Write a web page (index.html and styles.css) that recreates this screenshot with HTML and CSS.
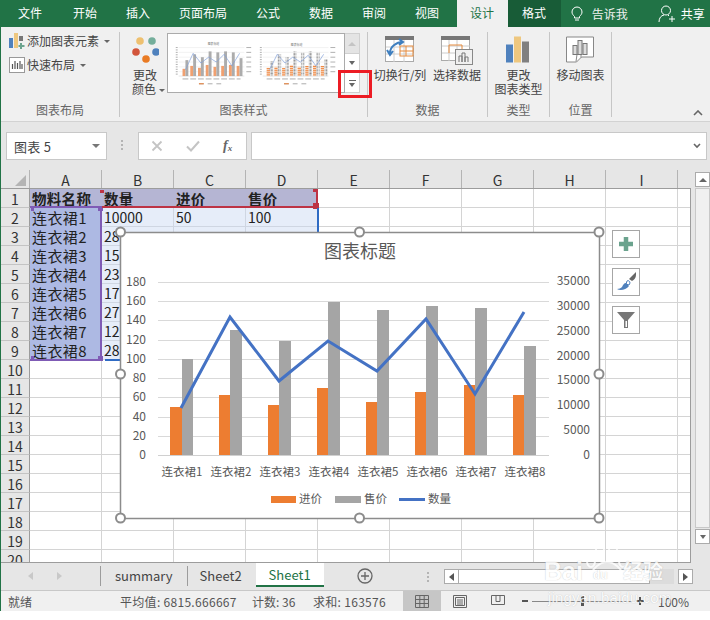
FILE: index.html
```html
<!DOCTYPE html>
<html lang="zh-CN">
<head>
<meta charset="utf-8">
<title>Excel</title>
<link rel="stylesheet" href="styles.css">
</head>
<body>
<div class="app">
  <nav class="tabbar">
    <span class="tab first">文件</span><span class="tab">开始</span><span class="tab">插入</span><span class="tab">页面布局</span><span class="tab">公式</span><span class="tab">数据</span><span class="tab">审阅</span><span class="tab">视图</span>
    <span class="tab active">设计</span><span class="tab format">格式</span>
    <span class="tell">
      <svg width="12" height="16" viewBox="0 0 12 16"><path d="M3.500 10.500C2 9 1 7.800 1 6a5 5 0 0 1 10 0c0 1.800-1 3-2.500 4.500V12h-5zM4 14h4" fill="none" stroke="#fff" stroke-width="1"/></svg>
      告诉我</span>
    <span class="share">
      <svg width="18" height="18" viewBox="0 0 18 18"><circle cx="8" cy="5.500" r="4.500" fill="none" stroke="#fff"/><path d="M1 17c0-4 2-6.500 5-7M10 10l1 1M14 11v6M11 14h6" fill="none" stroke="#fff"/></svg>
      共享</span>
  </nav>

  <div class="main">
    <section class="ribbon">
      <div class="group g1">
        <div class="group-body stack">
          <div class="small-row">
            <svg width="16" height="16" viewBox="0 0 16 16"><rect x="0" y="5" width="4" height="10" fill="#4f81bd"/><rect x="5" y="0" width="4" height="15" fill="#eec77f"/><rect x="10" y="3" width="4" height="5" fill="#777"/><path d="M12 10v6M9.500 13h6" stroke="#6ba38e" stroke-width="2"/></svg>
            <span>添加图表元素</span><i class="caret"></i>
          </div>
          <div class="small-row">
            <svg width="16" height="16" viewBox="0 0 16 16"><rect x=".5" y=".5" width="15" height="15" fill="#fff" stroke="#999"/><path d="M3.500 12V7M6 12V4M8.500 12V6M11 12V4M13 12V7" stroke="#555" stroke-width="1.200"/></svg>
            <span>快速布局</span><i class="caret"></i>
          </div>
        </div>
        <div class="group-label">图表布局</div>
      </div>

      <div class="group g2">
        <div class="group-body row">
          <div class="big colors">
            <svg class="big-icon" width="28" height="30" viewBox="0 0 28 30"><circle cx="9" cy="6" r="3.800" fill="#eec06f"/><circle cx="21" cy="6" r="3.800" fill="#74ae9b"/><circle cx="5" cy="17" r="3.800" fill="#d2553b"/><circle cx="25" cy="17" r="3.800" fill="#4f81bd"/><circle cx="15" cy="24" r="3.800" fill="#e97b24"/></svg>
            <span>更改</span>
            <span>颜色<i class="caret"></i></span>
          </div>
          <div class="gallery">
            <svg class="gallery-art" width="178" height="60" viewBox="167 33 178 60">
              <defs>
                <g id="mini-axis" stroke="#e6e6e6" stroke-width=".5"><path d="M176 47h68M176 52h68M176 57h68M176 62h68M176 67h68M176 72h68"/><path d="M176 76.500h68" stroke="#ccc"/><path d="M173 47h2M173 49.500h2M173 52h2M173 54.500h2M173 57h2M173 59.500h2M173 62h2M173 64.500h2M173 67h2M173 69.500h2M173 72h2M173 74.500h2" stroke="#999" stroke-width=".8"/><path d="M246 47h5M246 52h5M246 57h5M246 62h5M246 67h5M246 72h5" stroke="#999" stroke-width=".8"/></g>
                <pattern id="dots" width="1.500" height="1.500" patternUnits="userSpaceOnUse"><rect width="1.500" height="1.500" fill="#fff"/><rect width="1" height="1" fill="#8d8d8d"/></pattern>
                <pattern id="dashes" width="2" height="2" patternUnits="userSpaceOnUse"><rect width="2" height="2" fill="#fff"/><rect width="2" height="1.200" fill="#ed7d31"/></pattern>
              </defs>
              <use href="#mini-axis"/>
              <text class="mini-title" x="212" y="44.500" text-anchor="middle">图表标题</text>
              <g fill="#f0a070"><rect x="180" y="69" width="3" height="7.500"/><rect x="188" y="66" width="3" height="10.500"/><rect x="196" y="68" width="3" height="8.500"/><rect x="204" y="65" width="3" height="11.500"/><rect x="212" y="67" width="3" height="9.500"/><rect x="220" y="66" width="3" height="10.500"/><rect x="228" y="65" width="3" height="11.500"/><rect x="236" y="66" width="3" height="10.500"/></g>
              <g fill="#acacac"><rect x="183" y="60" width="3" height="16.500"/><rect x="191" y="54" width="3" height="22.500"/><rect x="199" y="57" width="3" height="19.500"/><rect x="207" y="51" width="3" height="25.500"/><rect x="215" y="52" width="3" height="24.500"/><rect x="223" y="51" width="3" height="25.500"/><rect x="231" y="52" width="3" height="24.500"/><rect x="239" y="58" width="3" height="18.500"/></g>
              <polyline points="183,70 191,53 199,63 207,57 215,62 223,54 231,66 239,53" fill="none" stroke="#7f9fd8" stroke-width=".7"/>
              <path d="M197 84.500h5M206 84.500h5M215 84.500h5" stroke="#aaa"/><path d="M197 84.500h5" stroke="#ed7d31"/>
              <path d="M180 79.500h60" stroke="#aaa" stroke-width="1" stroke-dasharray="6 2"/>
              <g transform="translate(87 0)"><use href="#mini-axis"/></g>
              <text class="mini-title" x="298" y="45.500" text-anchor="middle">图表标题</text>
              <g fill="url(#dashes)"><rect x="267" y="68" width="3.500" height="8.500"/><rect x="275" y="67" width="3.500" height="9.500"/><rect x="283" y="68" width="3.500" height="8.500"/><rect x="291" y="65" width="3.500" height="11.500"/><rect x="299" y="67" width="3.500" height="9.500"/><rect x="307" y="66" width="3.500" height="10.500"/><rect x="315" y="65" width="3.500" height="11.500"/><rect x="323" y="66" width="3.500" height="10.500"/></g>
              <g fill="url(#dots)"><rect x="270.500" y="61" width="3.500" height="15.500"/><rect x="278.500" y="54" width="3.500" height="22.500"/><rect x="286.500" y="57" width="3.500" height="19.500"/><rect x="294.500" y="51" width="3.500" height="25.500"/><rect x="302.500" y="52" width="3.500" height="24.500"/><rect x="310.500" y="51" width="3.500" height="25.500"/><rect x="318.500" y="52" width="3.500" height="24.500"/><rect x="326.500" y="59" width="3.500" height="17.500"/></g>
              <polyline points="270,70 278,54 286,63 294,57 302,62 310,55 318,66 326,54" fill="none" stroke="#7f9fd8" stroke-width=".7"/>
              <path d="M267 79.500h60" stroke="#aaa" stroke-dasharray="6 2"/>
              <path d="M285 84.500h5M294 84.500h5M303 84.500h5" stroke="#aaa"/><path d="M285 84.500h5" stroke="#ed7d31"/>
            </svg>
            <div class="gallery-btns">
              <div class="gbtn up"><i class="tri-up"></i></div>
              <div class="gbtn"><i class="tri-down"></i></div>
              <div class="gbtn last"><i class="more"></i></div>
            </div>
          </div>
        </div>
        <div class="group-label">图表样式</div>
      </div>

      <div class="group g3">
        <div class="group-body row data-row">
          <div class="big switch">
            <svg class="big-icon" width="30" height="28" viewBox="0 0 30 28"><rect x=".5" y=".5" width="28" height="25" fill="#fff" stroke="#aaa"/><rect x="0" y="0" width="29" height="4" fill="#777"/><path d="M1 11h28M1 18h28M9 4v22M19 4v22" stroke="#d0d0d0"/><rect x="15" y="10" width="13" height="10" fill="none" stroke="#e58a3c"/><path d="M15 15h13M21 10v10" stroke="#e58a3c"/><path d="M5 17c0-6 6-11 13-11M14 3l4 3-4 3M2 14l3 5 3-4" fill="none" stroke="#3f7fbf" stroke-width="2"/></svg>
            <span>切换行/列</span>
          </div>
          <div class="big select">
            <svg class="big-icon" width="32" height="30" viewBox="0 0 32 30"><rect x=".5" y="1.500" width="28" height="24" fill="#fff" stroke="#aaa"/><rect x="0" y="1" width="29" height="4" fill="#777"/><path d="M1 11h28M1 18h28M8 5v21M16 5v21" stroke="#ccc"/><path d="M8 18v-8h13v5" fill="none" stroke="#e58a3c"/><rect x="14.500" y="14.500" width="17" height="15" fill="#f0f0f0" stroke="#888"/><path d="M18 27v-6h3v6M21 27V18h3v9M24 27v-5h3v5" fill="none" stroke="#777"/></svg>
            <span>选择数据</span>
          </div>
        </div>
        <div class="group-label">数据</div>
      </div>

      <div class="group g4">
        <div class="group-body row center">
          <div class="big">
            <svg class="big-icon" width="24" height="27" viewBox="0 0 24 27"><rect x="0" y="8" width="7" height="18" fill="#4f81bd"/><rect x="8" y="0" width="7" height="26" fill="#eec77f"/><rect x="16" y="5" width="7" height="21" fill="#808080"/></svg>
            <span>更改</span>
            <span>图表类型</span>
          </div>
        </div>
        <div class="group-label">类型</div>
      </div>

      <div class="group g5">
        <div class="group-body row center">
          <div class="big">
            <svg class="big-icon" width="29" height="27" viewBox="0 0 29 27"><path d="M.5.500h27v20h-12l-5 5h-10z" fill="#fff" stroke="#888"/><path d="M15 21v-3l-4 0-1 7" fill="none" stroke="#888"/><rect x="7" y="9" width="4" height="9" fill="#ddd" stroke="#777"/><rect x="12" y="4" width="4" height="14" fill="#ddd" stroke="#777"/><rect x="17" y="7" width="4" height="11" fill="#ddd" stroke="#777"/></svg>
            <span>移动图表</span>
          </div>
        </div>
        <div class="group-label">位置</div>
      </div>

      <svg class="collapse" width="10" height="6" viewBox="0 0 10 6"><path d="M1 5l4-4 4 4" fill="none" stroke="#666" stroke-width="1.600"/></svg>
    </section>

    <section class="formula">
      <div class="namebox"><span>图表 5</span><i class="name-arrow"></i></div>
      <div class="grip"></div>
      <div class="fx-box">
        <svg width="12" height="12" viewBox="0 0 12 12"><path d="M1.500 1.500l9 9M10.500 1.500l-9 9" stroke="#c4c4c4" stroke-width="1.800"/></svg>
        <svg width="14" height="12" viewBox="0 0 14 12"><path d="M1 6.500l4 4 8-9" fill="none" stroke="#c4c4c4" stroke-width="2"/></svg>
        <span class="fx">f<sub>x</sub></span>
      </div>
      <div class="input"><svg width="8" height="6" viewBox="0 0 8 6"><path d="M1 1l3 3 3-3" fill="none" stroke="#666" stroke-width="1.600"/></svg></div>
    </section>

    <section class="sheet">
      <div class="grid">
        <div class="col-head">
          <div class="corner"><i></i></div>
          <div class="col">A</div><div class="col">B</div><div class="col">C</div><div class="col">D</div><div class="col">E</div><div class="col">F</div><div class="col">G</div><div class="col">H</div><div class="col">I</div><div class="col tail"></div>
        </div>
        <div class="grid-body">
          <div class="row-head">
            <div>1</div><div>2</div><div>3</div><div>4</div><div>5</div><div>6</div><div>7</div><div>8</div><div>9</div><div>10</div><div>11</div><div>12</div><div>13</div><div>14</div><div>15</div><div>16</div><div>17</div><div>18</div><div>19</div><div>20</div>
          </div>
          <div class="cells">
            <div class="cell head-a">物料名称</div><div class="cell head-b">数量</div><div class="cell head-b">进价</div><div class="cell head-b">售价</div>
            <div class="cell name">连衣裙1</div><div class="cell val">10000</div><div class="cell val">50</div><div class="cell val">100</div>
            <div class="cell name">连衣裙2</div><div class="cell val">28</div><div class="cell val"></div><div class="cell val"></div>
            <div class="cell name">连衣裙3</div><div class="cell val">15</div>
            <div class="cell name">连衣裙4</div><div class="cell val">23</div>
            <div class="cell name">连衣裙5</div><div class="cell val">17</div>
            <div class="cell name">连衣裙6</div><div class="cell val">27</div>
            <div class="cell name">连衣裙7</div><div class="cell val">12</div>
            <div class="cell name">连衣裙8</div><div class="cell val">28</div>

            <div class="range purple"><i class="hd h-tl"></i><i class="hd h-tr"></i><i class="hd h-bl"></i><i class="hd h-br"></i></div>
            <div class="range red"><i class="hd h-tl"></i><i class="hd h-tr"></i><i class="hd h-br"></i></div>
            <div class="range blue-r"></div>
            <div class="range blue-b"></div>

            <svg class="chart" width="480" height="287" viewBox="120 232 480 287">
              <rect x="120.500" y="232.500" width="479" height="286" fill="#fff" stroke="#8c8c8c" stroke-width="1.500"/>
              <text class="c-title" x="360" y="258" text-anchor="middle">图表标题</text>
              <path d="M158 282.500h391M158 301.500h391M158 320.500h391M158 340.500h391M158 359.500h391M158 378.500h391M158 397.500h391M158 417.500h391M158 436.500h391" stroke="#d9d9d9"/>
              <path d="M158 455.500h391" stroke="#d0d0d0"/>
              <g class="c-axis" text-anchor="end">
                <text x="146" y="286">180</text><text x="146" y="305">160</text><text x="146" y="324">140</text><text x="146" y="344">120</text><text x="146" y="363">100</text><text x="146" y="382">80</text><text x="146" y="401">60</text><text x="146" y="421">40</text><text x="146" y="440">20</text><text x="146" y="459">0</text>
              </g>
              <g class="c-axis" text-anchor="end">
                <text x="590" y="285">35000</text><text x="590" y="310">30000</text><text x="590" y="335">25000</text><text x="590" y="360">20000</text><text x="590" y="384">15000</text><text x="590" y="409">10000</text><text x="590" y="434">5000</text><text x="590" y="459">0</text>
              </g>
              <g fill="#ed7d31">
                <rect x="170" y="407" width="12" height="48"/><rect x="219" y="395" width="11" height="60"/><rect x="268" y="405" width="11" height="50"/><rect x="317" y="388" width="11" height="67"/><rect x="366" y="402" width="11" height="53"/><rect x="415" y="392" width="11" height="63"/><rect x="464" y="385" width="11" height="70"/><rect x="513" y="395" width="11" height="60"/>
              </g>
              <g fill="#a5a5a5">
                <rect x="182" y="359" width="11" height="96"/><rect x="230" y="330" width="12" height="125"/><rect x="279" y="341" width="12" height="114"/><rect x="328" y="302" width="12" height="153"/><rect x="377" y="310" width="12" height="145"/><rect x="426" y="306" width="12" height="149"/><rect x="475" y="308" width="12" height="147"/><rect x="524" y="346" width="12" height="109"/>
              </g>
              <polyline points="181,408 230,317 279,381 328,341 377,371 426,319 475,394 524,312" fill="none" stroke="#4472c4" stroke-width="3"/>
              <g class="c-cat" text-anchor="middle">
                <text x="182" y="476">连衣裙1</text><text x="231" y="476">连衣裙2</text><text x="280" y="476">连衣裙3</text><text x="329" y="476">连衣裙4</text><text x="378" y="476">连衣裙5</text><text x="427" y="476">连衣裙6</text><text x="476" y="476">连衣裙7</text><text x="525" y="476">连衣裙8</text>
              </g>
              <rect x="271" y="496" width="25" height="7" fill="#ed7d31"/><text class="c-cat" x="299" y="503">进价</text>
              <rect x="335" y="496" width="26" height="7" fill="#a5a5a5"/><text class="c-cat" x="364" y="503">售价</text>
              <path d="M399 499.500h26" stroke="#4472c4" stroke-width="3"/><text class="c-cat" x="428" y="503">数量</text>
              <g fill="#fff" stroke="#8c8c8c" stroke-width="2">
                <circle cx="120.500" cy="232" r="4.500"/><circle cx="359.500" cy="232" r="4.500"/><circle cx="599" cy="232" r="4.500"/><circle cx="120.500" cy="374" r="4.500"/><circle cx="599" cy="374" r="4.500"/><circle cx="120.500" cy="518" r="4.500"/><circle cx="359.500" cy="518" r="4.500"/><circle cx="599" cy="518" r="4.500"/>
              </g>
            </svg>

            <div class="side">
              <div class="side-btn"><svg width="16" height="16" viewBox="0 0 16 16"><path d="M8 1v14M1 8h14" stroke="#6ba38e" stroke-width="4.500"/></svg></div>
              <div class="side-btn"><svg width="22" height="22" viewBox="0 0 22 22"><path d="M21 1l-7 7 3 2c2-1 4-3 4-6z" fill="#666"/><path d="M12 10c1-1 3 0 3 2l-1 2-3-1z" fill="#fff" stroke="#4f81bd"/><path d="M11 12c-2 0-3 2-4 4-1 1-3 2-5 2 3 2 9 1 12-3z" fill="#4f81bd"/></svg></div>
              <div class="side-btn"><svg width="20" height="20" viewBox="0 0 20 20"><path d="M1 2h18l-7 8v8H8v-8z" fill="#777"/><path d="M9.500 11h1.500v6H9.500z" fill="#fff"/></svg></div>
            </div>
          </div>
        </div>
      </div>
      <div class="vscroll">
        <div class="vbtn"><i class="tri-up dark"></i></div>
        <div class="vthumb"></div>
        <div class="vbtn"><i class="tri-down dark"></i></div>
      </div>
    </section>

    <section class="tabs">
      <div class="nav"><i class="nav-l"></i><i class="nav-r"></i></div>
      <div class="sheet-tab">summary</div>
      <div class="sheet-tab s2">Sheet2</div>
      <div class="sheet-tab on">Sheet1</div>
      <svg class="add" width="16" height="16" viewBox="0 0 16 16"><circle cx="8" cy="8" r="7" fill="none" stroke="#666" stroke-width="1.300"/><path d="M8 4v8M4 8h8" stroke="#666" stroke-width="1.300"/></svg>
      <div class="hgrip"></div>
      <div class="hscroll">
        <div class="hbtn"><i class="nav-l dark"></i></div>
        <div class="hthumb"></div>
        <div class="htrack"></div>
        <div class="hbtn"><i class="nav-r dark"></i></div>
      </div>
    </section>

    <footer class="status">
      <span class="st-ready">就绪</span>
      <span class="st-avg">平均值: 6815.666667</span>
      <span class="st-count">计数: 36</span>
      <span class="st-sum">求和: 163576</span>
      <div class="view on"><svg width="14" height="13" viewBox="0 0 14 13"><path d="M.5.500h13v12H.5zM.5 4.500h13M.5 8.500h13M4.800.500v12M9.200.500v12" fill="none" stroke="#666"/></svg></div>
      <div class="view"><svg width="14" height="13" viewBox="0 0 14 13"><path d="M.5.500h13v12H.5z" fill="none" stroke="#666"/><path d="M2.500 2.500h9v8h-9zM4 5h6M4 7h6M4 9h6" fill="none" stroke="#666"/></svg></div>
      <div class="view"><svg width="14" height="13" viewBox="0 0 14 13"><path d="M.5.500h13v9H.5zM5 .500v6h4v-6" fill="none" stroke="#666"/></svg></div>
      <div class="zoom">
        <i class="minus"></i>
        <div class="slider"><i class="knob"></i></div>
        <i class="plus"></i>
      </div>
      <span class="pct">100%</span>
    </footer>
  </div>

  <div class="redbox"></div>

  <div class="watermark">
    <svg width="44" height="40" viewBox="0 0 44 40"><g fill="none" stroke="#fff" stroke-width="2"><ellipse cx="6" cy="18" rx="4" ry="6"/><ellipse cx="15" cy="6" rx="4" ry="5.500"/><ellipse cx="28" cy="6" rx="4" ry="5.500"/><ellipse cx="38" cy="18" rx="4" ry="6"/><path d="M6 34c0-8 9-15 16-15s16 7 16 15c0 4-6 5-16 5S6 38 6 34z"/></g></svg>
    <div class="wm-main"><span>Bai</span><span class="wm-du">du</span><span class="wm-jy">经验</span></div>
    <div class="wm-sub">jingyan.baidu.com</div>
  </div>
</div>
</body>
</html>
```
FILE: styles.css
```css
* { box-sizing: border-box; }
html, body { margin: 0; padding: 0; background: #fff; }
body { width: 710px; height: 620px; overflow: hidden; font-family: "Noto Sans CJK SC", "Noto Sans", sans-serif; color: #444; }
i { display: block; font-style: normal; }
.app { position: relative; width: 710px; height: 611px; }

/* tab bar */
.tabbar { display: flex; align-items: stretch; height: 27px; background: #217346; color: #fff; font-size: 12px; line-height: 25px; }
.tab { padding: 0 14.500px; }
.tab.first { padding: 0 16.500px 0 18px; }
.tab.active { width: 51px; margin-left: 3px; padding: 0; text-align: center; background: #f0f0f0; color: #217346; }
.tab.format { width: 53px; padding: 0; text-align: center; background: #185c37; }
.tell { display: flex; align-items: center; gap: 9px; margin-left: 10px; color: #f0f0f0; }
.share { display: flex; align-items: center; gap: 5px; margin-left: 30px; }

.main { border-left: 1px solid #217346; }

/* ribbon */
.ribbon { position: relative; display: flex; height: 95px; padding: 5px 0 4px; background: #f0f0f0; border-bottom: 1px solid #d2d2d2; font-size: 12px; color: #444; }
.group { display: flex; flex-direction: column; border-right: 1px solid #c6c6c6; }
.g1 { width: 119px; }
.g2 { width: 248px; }
.g3 { width: 120px; }
.g4 { width: 62px; }
.g5 { width: 62px; }
.group-body { flex: 1; min-height: 0; }
.group-label { height: 16px; padding-top: 1px; line-height: 15px; text-align: center; color: #666; }
.stack { display: flex; flex-direction: column; gap: 6px; padding-left: 8px; }
.small-row { display: flex; align-items: center; height: 18px; gap: 2px; line-height: 18px; }
.small-row svg { flex: none; }
.caret { display: inline-block; width: 0; height: 0; margin-left: 3px; border: 3px solid transparent; border-top: 3px solid #666; border-bottom: 0; vertical-align: middle; }
.row { display: flex; }
.row.center { justify-content: center; }
.big { display: flex; flex-direction: column; align-items: center; padding-top: 3px; line-height: 14px; white-space: nowrap; }
.big-icon { display: block; height: 30px; margin-bottom: 3px; flex: none; }
.colors { width: 40px; margin-left: 5px; }
.colors .big-icon { margin-bottom: 3px; }
.colors span:last-child { margin-left: 7px; }
.gallery { display: flex; width: 193px; height: 60px; margin: 1px 0 0 2px; }
.gallery-art { display: block; flex: none; background: #fff; border: 1px solid #ababab; }
.mini-title { font-size: 3px; fill: #777; }
.gallery-btns { display: flex; flex-direction: column; width: 15px; flex: none; }
.gbtn { display: flex; align-items: center; justify-content: center; height: 19px; background: #fff; border: 1px solid #d0d0d0; border-left: 0; border-top: 0; }
.gbtn.up { height: 21px; background: #e4e4e4; border-top: 1px solid #d0d0d0; }
.gbtn.last { height: 20px; }
.tri-up { width: 0; height: 0; border: 4px solid transparent; border-top: 0; border-bottom: 4px solid #c4c4c4; }
.tri-down { width: 0; height: 0; border: 3.500px solid transparent; border-bottom: 0; border-top: 4px solid #666; }
.tri-up.dark { border-bottom-color: #666; }
.more { width: 7px; height: 6px; border-top: 1px solid #666; position: relative; }
.more::after { content: ""; position: absolute; left: 0; top: 2px; border: 3.500px solid transparent; border-bottom: 0; border-top: 4px solid #666; }
.data-row { padding-left: 5px; gap: 5px; }
.switch { width: 54px; }
.select { width: 50px; }
.collapse { position: absolute; left: 692px; top: 83px; }

/* formula bar */
.formula { display: flex; align-items: flex-start; height: 48px; padding: 10px 2px 0 5px; background: #e6e6e6; font-size: 13px; }
.namebox { display: flex; align-items: center; justify-content: space-between; width: 101px; height: 28px; padding: 0 6px 0 7px; background: #fff; border: 1px solid #c8c8c8; color: #444; letter-spacing: .3px; }
.name-arrow { border: 4px solid transparent; border-bottom: 0; border-top: 4px solid #777; margin-right: 0; }
.grip { width: 2px; height: 12px; margin: 8px 15px 0 14px; background-image: linear-gradient(#b4b4b4 2px, transparent 2px); background-size: 2px 4px; }
.fx-box { display: flex; align-items: center; gap: 23px; width: 109px; height: 28px; padding: 0 0 0 12px; margin-right: 4px; background: #fff; border: 1px solid #c8c8c8; }
.fx { font-family: "Liberation Serif", serif; font-style: italic; font-weight: bold; font-size: 14px; line-height: 14px; color: #666; }
.fx sub { font-size: 9px; vertical-align: -1px; line-height: 0; }
.input { display: flex; align-items: center; justify-content: flex-end; width: 456px; height: 28px; padding-right: 5px; background: #fff; border: 1px solid #c8c8c8; }

/* sheet */
.sheet { display: flex; height: 393px; background: #e6e6e6; }
.grid { width: 690px; flex: none; height: 393px; }
.col-head { display: flex; height: 19px; background: #e6e6e6; border-bottom: 1px solid #9c9c9c; color: #333; font-size: 14px; line-height: 20px; }
.corner { position: relative; width: 29px; flex: none; border-right: 1px solid #b4b4b4; }
.corner i { position: absolute; left: 14px; top: 5px; width: 0; height: 0; border-style: solid; border-width: 0 0 11px 11px; border-color: transparent transparent #b4b4b4 transparent; }
.col { width: 72px; flex: none; text-align: center; border-right: 1px solid #b4b4b4; }
.col.tail { width: 12px; border-right: 0; }
.grid-body { display: flex; height: 374px; overflow: hidden; border-right: 1px solid #9c9c9c; border-bottom: 1px solid #9c9c9c; }
.row-head { width: 29px; flex: none; font-size: 14px; color: #333; }
.row-head div { height: 19px; line-height: 20px; padding-left: 0; text-align: center; border-right: 1px solid #9c9c9c; border-bottom: 1px solid #c4c4c4; }
.cells { position: relative; flex: 1; display: grid; grid-template-columns: repeat(4, 72px); grid-auto-rows: 19px; align-content: start; background-color: #fff; background-image: linear-gradient(to right, transparent 71px, #d4d4d4 71px), linear-gradient(to bottom, transparent 18px, #d4d4d4 18px); background-size: 72px 100%, 100% 19px; }
.cell { padding-left: 2px; font-size: 15px; line-height: 19px; color: #222; white-space: nowrap; overflow: hidden; border-right: 1px solid #d0d0d0; border-bottom: 1px solid #d0d0d0; }
.head-a { background: #b4b6d6; font-weight: 700; font-size: 14.500px; letter-spacing: .3px; border-color: #b4b6d6; }
.head-b { background: #b5b5d3; font-weight: 700; font-size: 14.500px; letter-spacing: .3px; border-color: #b5b5d3; }
.name { grid-column: 1; background: #adb9e3; border-color: #adb9e3; letter-spacing: .4px; }
.val { background: #e6edf9; font-size: 14px; border-color: #cfd6e2; }

.range { position: absolute; }
.purple { left: 0; top: 17px; width: 72px; height: 155px; border: 2px solid #7f5bb5; border-left: 0; }
.red { left: 72px; top: 0; width: 216px; height: 19px; border: 2px solid #bd3344; border-width: 0 2px 2px 0; }
.blue-r { left: 287px; top: 19px; width: 2px; height: 25px; background: #2f6bc4; }
.blue-b { left: 75px; top: 170px; width: 15px; height: 2px; background: #2f6bc4; }
.hd { position: absolute; width: 5px; height: 5px; background: inherit; }
.purple .hd { background: #7f5bb5; }
.red .hd { background: #bd3344; }
.purple .h-tl { left: 1px; top: -2px; width: 3px; }
.purple .h-tr { right: -3px; top: -2px; }
.purple .h-bl { left: 1px; bottom: -2px; width: 3px; }
.purple .h-br { right: -3px; bottom: -2px; }
.red .h-tl { left: -2px; top: 1px; width: 4px; height: 3px; }
.red .h-tr { right: -2px; top: 0; height: 3px; }
.red .h-br { right: -3px; bottom: -3px; width: 6px; height: 6px; }

.chart { position: absolute; left: 90px; top: 43px; display: block; overflow: visible; }
.c-title { font-size: 18px; fill: #595959; }
.c-axis text { font-size: 12px; fill: #595959; }
.c-cat, .c-cat text { font-size: 11.500px; fill: #595959; }
.side { position: absolute; left: 582px; top: 41px; display: flex; flex-direction: column; gap: 10px; }
.side-btn { display: flex; align-items: center; justify-content: center; width: 28px; height: 28px; background: #fff; border: 1px solid #a6a6a6; }

.vscroll { display: flex; flex-direction: column; width: 15px; margin-left: 4px; padding-top: 2px; height: 374px; }
.vbtn { display: flex; align-items: center; justify-content: center; height: 15px; flex: none; background: #fff; border: 1px solid #ababab; }
.vthumb { flex: 1; margin: 1px 0; background: #f0f0f0; border: 1px solid #c8c8c8; }

/* sheet tabs */
.tabs { position: relative; display: flex; align-items: flex-start; height: 27px; background: #e6e6e6; font-size: 13px; color: #444; }
.nav { display: flex; gap: 24px; width: 100px; height: 20px; padding: 6px 0 0 27px; border-right: 1px solid #9c9c9c; margin-top: 3px; }
.nav-l { width: 0; height: 0; border: 4px solid transparent; border-left: 0; border-right: 5px solid #c8c8c8; }
.nav-r { width: 0; height: 0; border: 4px solid transparent; border-right: 0; border-left: 5px solid #c8c8c8; }
.nav-l.dark { border-right-color: #555; }
.nav-r.dark { border-left-color: #555; }
.sheet-tab { height: 20px; margin-top: 3px; padding: 0 14px; line-height: 19px; border-right: 1px solid #9c9c9c; white-space: nowrap; }
.sheet-tab.s2 { border-right: 0; padding: 0 14px 0 12px; }
.sheet-tab.on { width: 68px; height: 24px; margin-top: 0; padding: 0; line-height: 24px; text-align: center; background: #fff; color: #217346; border: 0; border-bottom: 2px solid #217346; }
.add { margin: 5px 0 0 33px; }
.hgrip { width: 2px; height: 11px; margin: 9px 0 0 54px; background-image: linear-gradient(#b4b4b4 2px, transparent 2px); background-size: 2px 4px; }
.hscroll { display: flex; width: 249px; height: 15px; margin: 6px 0 0 15px; }
.hbtn { display: flex; align-items: center; justify-content: center; width: 15px; height: 15px; background: #fff; border: 1px solid #ababab; flex: none; }
.hthumb { width: 191px; background: #fff; border: 1px solid #ababab; border-left: 0; }
.htrack { flex: 1; margin-right: 4px; background: #dcdcdc; }

/* status bar */
.status { display: flex; align-items: center; height: 21px; background: #f0f0f0; border-top: 1px solid #c8c8c8; font-size: 12px; color: #555; white-space: nowrap; }
.st-ready { margin-left: 7px; width: 112px; }
.st-avg { width: 132px; letter-spacing: .3px; }
.st-count { width: 61px; }
.st-sum { width: 90px; letter-spacing: .3px; }
.view { display: flex; align-items: center; justify-content: center; width: 38px; height: 20px; }
.view.on { background: #c6c6c6; }
.zoom { display: flex; align-items: center; margin-left: 5px; }
.minus { width: 6px; height: 2px; background: #555; }
.slider { position: relative; width: 100px; height: 1px; margin: 0 4px; background: #888; }
.knob { position: absolute; left: 49px; top: -5px; width: 3px; height: 10px; background: #555; }
.plus { position: relative; width: 8px; height: 2px; background: #555; }
.plus::after { content: ""; position: absolute; left: 3px; top: -3px; width: 2px; height: 8px; background: #555; }
.pct { margin-left: 14px; }

/* overlays */
.redbox { position: absolute; left: 338px; top: 70px; width: 34px; height: 28px; border: 3px solid #ec1c24; }
.watermark { position: absolute; left: 540px; top: 541px; width: 140px; height: 68px; color: #fff; opacity: .8; text-shadow: 0 0 1px rgba(130,130,130,.6); }
.watermark svg { position: absolute; left: 45px; top: 2px; }
.wm-main { position: absolute; left: 4px; top: 16px; display: flex; align-items: center; width: 130px; font-family: "Liberation Sans", sans-serif; font-size: 25px; line-height: 28px; font-weight: 700; white-space: nowrap; }
.wm-du { width: 30px; margin-left: 10px; font-size: 12px; line-height: 12px; padding-top: 8px; }
.wm-jy { margin-left: 0; font-family: "Noto Sans CJK SC", sans-serif; font-size: 20px; }
.wm-sub { position: absolute; left: 8px; top: 48px; font-family: "Liberation Sans", sans-serif; font-size: 15px; line-height: 18px; letter-spacing: .15px; white-space: nowrap; }
```
